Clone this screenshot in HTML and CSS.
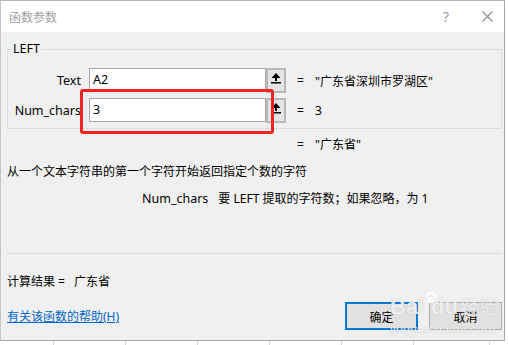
FILE: index.html
```html
<!DOCTYPE html>
<html lang="zh-CN">
  <head>
    <meta charset="UTF-8" />
    <title>函数参数</title>
    <link rel="stylesheet" href="styles.css">
  </head>
  <body>
    <div class="dialog">
      <div class="titlebar">
        <span class="title">函数参数</span>
        <span class="help">?</span>
        <svg class="close" viewBox="0 0 11 11" width="11" height="11">
          <path d="M0.5 0.5 L10.5 10.5 M10.5 0.5 L0.5 10.5" stroke="#8a8a8a" stroke-width="1.1" fill="none" />
        </svg>
      </div>
      <div class="content">
        <fieldset class="group">
          <legend>LEFT</legend>
          <div class="args">
            <label class="name">Text</label>
            <div class="field">A2</div>
            <button class="pick">
              <svg viewBox="0 0 10 11" width="10" height="11">
                <path d="M5 0 L9.5 5 H6 V8 H4 V5 H0.5 Z M0 9 H10 V10.6 H0 Z" fill="#000" />
              </svg>
            </button>
            <span class="eq">=</span>
            <span class="val">"广东省深圳市罗湖区"</span>

            <label class="name">Num_chars</label>
            <div class="field">3</div>
            <button class="pick">
              <svg viewBox="0 0 10 11" width="10" height="11">
                <path d="M5 0 L9.5 5 H6 V8 H4 V5 H0.5 Z M0 9 H10 V10.6 H0 Z" fill="#000" />
              </svg>
            </button>
            <span class="eq">=</span>
            <span class="val">3</span>
          </div>
        </fieldset>
        <div class="result-row">
          <span class="eq">=</span>
          <span class="val">"广东省"</span>
        </div>
        <p class="desc">从一个文本字符串的第一个字符开始返回指定个数的字符</p>
        <p class="arg-desc"><span class="arg-name">Num_chars</span>要 LEFT 提取的字符数；如果忽略，为 1</p>
        <hr class="sep">
        <p class="calc">计算结果 = <span class="calc-val">广东省</span></p>
        <div class="footer">
          <a class="help-link" href="#">有关该函数的帮助(H)</a>
          <div class="buttons">
            <button class="btn btn-ok">确定</button>
            <button class="btn">取消</button>
          </div>
        </div>
      </div>
      <div class="highlight"></div>
      <div class="watermark">
        <div class="wm-logo">
          <span>Bai</span>
          <svg class="wm-paw" viewBox="0 0 26 26" width="26" height="26">
            <ellipse cx="6" cy="8" rx="3" ry="4" />
            <ellipse cx="11" cy="3.5" rx="3" ry="3.5" />
            <ellipse cx="17" cy="3.5" rx="3" ry="3.5" />
            <ellipse cx="22" cy="8" rx="3" ry="4" />
            <path d="M14 11 C9 11 6 17 6 20 C6 24 10 24 14 23 C18 24 22 24 22 20 C22 17 19 11 14 11 Z" />
          </svg>
          <span class="wm-du">du</span>
          <span class="wm-cn">经验</span>
        </div>
        <div class="wm-url">jingyan.baidu.com</div>
      </div>
    </div>
  </body>
</html>
```

FILE: styles.css
```css
* {
  box-sizing: border-box;
}
html {
  overflow: hidden;
}
body {
  margin: 0;
  width: 508px;
  height: 345px;
  overflow: hidden;
  background: #fff repeating-linear-gradient(90deg, transparent 0, transparent 53px, #d4d4d4 53px, #d4d4d4 54px, transparent 54px, transparent 72px);
  background-position: -72px 0;
  font-family: "Noto Sans", "Noto Sans CJK SC", sans-serif;
  font-size: 12px;
  color: #000;
}
.dialog {
  position: relative;
  width: 505px;
  height: 341px;
  overflow: hidden;
  background: #f0f0f0;
  border-top: 1px solid #b4b4b4;
  border-left: 1px solid #c4c4c4;
  border-right: 1px solid #a8a8a8;
  border-bottom: 1px solid #a8a8a8;
}
.titlebar {
  height: 31px;
  background: #fff;
  display: flex;
  align-items: center;
  padding: 0 11px 0 8px;
}
.title {
  color: #a0a0a0;
  font-family: "Noto Sans CJK SC", sans-serif;
  font-size: 12px;
  flex: 1;
}
.help {
  color: #9a9a9a;
  font-size: 14px;
  margin-right: 33px;
}
.close {
  display: block;
}
.content {
  padding: 0 2px 0 6px;
}
.group {
  margin: 9px 0 0;
  padding: 11px 0 5px;
  border: 1px solid #dcdcdc;
  min-width: 0;
}
.group legend {
  padding: 0 1px;
  margin-left: 4px;
  font-size: 12.5px;
  line-height: 16px;
}
.args {
  display: grid;
  grid-template-columns: 81px 177px 20px 29px 1fr;
  grid-auto-rows: 25px;
  row-gap: 5px;
  align-items: center;
}
.name {
  text-align: right;
  padding-right: 8px;
  font-size: 12.5px;
}
.field {
  height: 24px;
  align-self: start;
  background: #fff;
  border: 1px solid #a9a9a9;
  padding: 3px 3px 0;
  font-size: 12.5px;
  line-height: 16px;
}
.pick {
  width: 20px;
  height: 25px;
  border: 2px solid #b7b7b7;
  background: #e4e4e4;
  display: flex;
  align-items: flex-start;
  justify-content: center;
  padding: 3px 0 0;
}
.pick svg {
  display: block;
}
.eq {
  padding-left: 11px;
}
.result-row {
  display: flex;
  margin-top: 8px;
  padding-left: 290px;
  line-height: 16px;
}
.result-row .eq {
  width: 18px;
  padding-left: 0;
}
.desc {
  margin: 11px 0 0;
  line-height: 16px;
}
.arg-desc {
  margin: 11px 0 0;
  padding-left: 135px;
  line-height: 16px;
}
.arg-name {
  font-size: 12.5px;
  margin-right: 10px;
}
.sep {
  margin: 46px 0 0;
  border: none;
  border-top: 1px solid #d9d9d9;
  height: 0;
}
.calc {
  margin: 20px 0 0;
  line-height: 16px;
}
.calc-val {
  margin-left: 6px;
}
.footer {
  display: flex;
  align-items: center;
  justify-content: space-between;
  margin-top: 12px;
}
.help-link {
  color: #0066cc;
  text-decoration: underline;
}
.buttons {
  display: flex;
  gap: 11px;
}
.btn {
  width: 73px;
  height: 28px;
  border: 1px solid #adadad;
  background: #e1e1e1;
  font-family: "Noto Sans CJK SC", sans-serif;
  font-size: 12px;
  color: #000;
}
.btn-ok {
  border: 2px solid #0078d7;
}
.highlight {
  position: absolute;
  left: 79px;
  top: 88px;
  width: 194px;
  height: 45px;
  border: 3px solid #f52222;
  border-radius: 3px;
}
.watermark {
  position: absolute;
  left: 389px;
  top: 288px;
  width: 110px;
  white-space: nowrap;
  color: rgba(255, 255, 255, 0.8);
  text-shadow: 0 0 1px rgba(140, 140, 140, 0.6);
  pointer-events: none;
}
.wm-logo {
  display: flex;
  align-items: flex-end;
  font-family: "Liberation Sans", sans-serif;
  font-weight: bold;
  font-size: 22px;
  line-height: 28px;
}
.wm-paw {
  fill: rgba(255, 255, 255, 0.85);
  width: 18px;
  height: 18px;
  margin: 0 -4px 14px 0;
}
.wm-du {
  margin-left: -2px;
}
.wm-cn {
  font-family: "Noto Sans CJK SC", sans-serif;
  font-weight: normal;
  font-size: 20px;
  margin-left: 2px;
}
.wm-url {
  font-family: "Liberation Sans", sans-serif;
  font-size: 13px;
  line-height: 14px;
  margin-top: 2px;
}
```
